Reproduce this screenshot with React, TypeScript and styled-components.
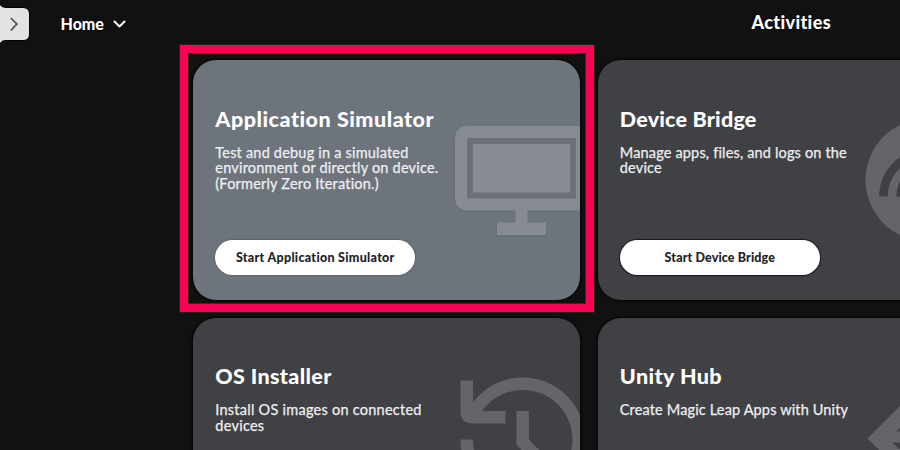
import React from "react";
import styled, { createGlobalStyle } from "styled-components";

const GlobalStyle = createGlobalStyle`
  * { box-sizing: border-box; }
  html, body { margin: 0; padding: 0; background: #111111; }
  body { overflow: hidden; }
`;

const Page = styled.div`
  position: relative;
  width: 900px;
  height: 450px;
  overflow: hidden;
  display: flex;
  flex-direction: column;
  background: #111111;
  color: #ffffff;
  font-family: "Lato", "Noto Sans", sans-serif;
  font-variant-ligatures: none;
`;

const TopBar = styled.header`
  display: flex;
  align-items: flex-start;
  flex: none;
  height: 60.4px;
`;

const DrawerTab = styled.button`
  width: 32px;
  height: 48px;
  padding: 0;
  border: 0;
  background: none;
  flex: none;

  svg { display: block; }
`;

const HomeMenu = styled.button`
  display: flex;
  align-items: center;
  gap: 9px;
  height: 48px;
  margin: 0 0 0 28.5px;
  padding: 0;
  border: 0;
  background: none;
  color: inherit;
  font: 900 16px/20px "Lato", sans-serif;
  text-shadow: 0 0 2px #000;

  svg { display: block; }
`;

const HomeLabel = styled.span`
  width: 43.5px;
  white-space: nowrap;
  text-align: left;
  letter-spacing: 0;
`;

const Heading = styled.h1`
  margin: 11px 0 0 625.5px;
  font-size: 18px;
  line-height: 22px;
  font-weight: 900;
  letter-spacing: 0.35px;
  text-shadow: 0 0 2px #000;
`;

const CardGrid = styled.main`
  display: grid;
  grid-template-columns: 387px 387px;
  grid-auto-rows: 240px;
  gap: 17.2px 17.5px;
  margin-left: 193.3px;
`;

const CardBox = styled.section<{ $active?: boolean }>`
  position: relative;
  overflow: hidden;
  display: flex;
  flex-direction: column;
  align-items: flex-start;
  padding: 45.4px 22px 25px;
  border-radius: 23px;
  background: ${(p) => (p.$active ? "#6d747c" : "#404144")};
  box-shadow: 0 0 2px 1px #050505;
`;

const CardTitle = styled.h2<{ $track: number }>`
  position: relative;
  margin: 0;
  font-size: 21.5px;
  line-height: 26px;
  font-weight: 900;
  white-space: nowrap;
  letter-spacing: ${(p) => p.$track}px;
`;

const CardText = styled.p<{ $track: number }>`
  position: relative;
  margin: 13.2px 0 0;
  font-size: 14.5px;
  line-height: 15.5px;
  color: #eeeff0;
  -webkit-text-stroke: 0.25px #eeeff0;
  white-space: pre;
  letter-spacing: ${(p) => p.$track}px;
`;

const PillButton = styled.button<{ $track: number; $active?: boolean }>`
  width: 200px;
  height: 35px;
  margin-top: auto;
  padding: 0;
  border: 0;
  border-radius: 18px;
  background: #ffffff;
  color: #222226;
  font: 900 12.5px/16px "Lato", sans-serif;
  letter-spacing: ${(p) => p.$track}px;
  box-shadow: 0 0 1px 1px ${(p) => (p.$active ? "#5f656f" : "#17181c")};
`;

const Artwork = styled.svg`
  position: absolute;
  inset: 0;
  width: 387px;
  height: 240px;
`;

const Highlight = styled.div`
  position: absolute;
  left: 180px;
  top: 45px;
  width: 414px;
  height: 267px;
  border: 8px solid #f70457;
  outline: 1px solid #27200f;
  box-shadow: inset 0 0 0 1px #34301a;
`;

const MonitorArt = () => (
  <Artwork viewBox="0 0 387 240">
    <g fill="#656a75" opacity="0.45" transform="translate(0 1)">
      <rect x="261.5" y="65.5" width="144" height="85.5" rx="13" />
      <path d="M322 151h13v11h19v14h-51v-14h19z" />
    </g>
    <rect x="262" y="66" width="143" height="84.5" rx="12" fill="#878b92" />
    <rect x="274" y="78" width="109" height="60.5" fill="#6c707a" />
    <rect x="280" y="84" width="97" height="48.5" fill="#888c94" />
    <path d="M322.5 150h12v12.5H353V175h-49v-12.5h18.5z" fill="#878b92" />
  </Artwork>
);

const BridgeArt = () => (
  <Artwork viewBox="0 0 387 240">
    <circle cx="328.5" cy="120" r="61" fill="#646569" />
    <g fill="none" stroke="#404144" strokeWidth="8.5">
      <path d="M285.5 136.5a43.5 43.5 0 0 1 87 0" />
      <path d="M302.5 136.5a26.5 26.5 0 0 1 53 0" />
    </g>
  </Artwork>
);

const HistoryArt = () => (
  <Artwork viewBox="0 0 387 240">
    <g fill="none" stroke="#646569" strokeWidth="12.5">
      <path d="M278.500 99A56 56 0 1 1 273.700 121.500" />
      <path d="M329.700 93v31l27 28" />
    </g>
    <path
      d="M267.500 62.500h12.500v27q0 3.500 3.500 3.500h29v12.500H280q-12.500 0-12.500-12z"
      fill="#646569"
    />
  </Artwork>
);

const UnityArt = () => (
  <Artwork viewBox="0 0 387 240">
    <path d="M269.500 120.500l33-33h20v66h-20z" fill="#646569" />
    <path d="M298 113.500l11-10v10zM294 124.500h16v14z" fill="#404144" />
  </Artwork>
);

type CardData = {
  title: string;
  titleTrack: number;
  text: string;
  textTrack: number;
  action?: string;
  actionTrack?: number;
  active?: boolean;
  art: React.ReactNode;
};

const cards: CardData[] = [
  {
    title: "Application Simulator",
    titleTrack: 0.52,
    text: "Test and debug in a simulated\nenvironment or directly on device.\n(Formerly Zero Iteration.)",
    textTrack: 0.2,
    action: "Start Application Simulator",
    actionTrack: 0.3,
    active: true,
    art: <MonitorArt />,
  },
  {
    title: "Device Bridge",
    titleTrack: 0.2,
    text: "Manage apps, files, and logs on the\ndevice",
    textTrack: 0.16,
    action: "Start Device Bridge",
    actionTrack: 0.12,
    art: <BridgeArt />,
  },
  {
    title: "OS Installer",
    titleTrack: 0.35,
    text: "Install OS images on connected\ndevices",
    textTrack: 0.25,
    art: <HistoryArt />,
  },
  {
    title: "Unity Hub",
    titleTrack: 0.42,
    text: "Create Magic Leap Apps with Unity",
    textTrack: 0.15,
    art: <UnityArt />,
  },
];

export default function App() {
  return (
    <>
      <GlobalStyle />
      <Page>
        <TopBar>
          <DrawerTab aria-label="Open drawer">
            <svg width="32" height="48" viewBox="0 0 32 48">
              <path
                d="M0 5Q2 8 5 8H23Q29 8 29 14V34Q29 40 23 40H5Q2 40 0 43Z"
                fill="#e1e3e2"
                stroke="#000"
                strokeWidth="2"
                paintOrder="stroke"
              />
              <path d="M10.800 18l6 6-6 6.500" fill="none" stroke="#4b4c4e" strokeWidth="1.700" />
            </svg>
          </DrawerTab>
          <HomeMenu>
            <HomeLabel>Home</HomeLabel>
            <svg width="13" height="9" viewBox="0 0 13 9">
              <path
                d="M1.500 1.500l5 5 5-5"
                fill="none"
                stroke="#fff"
                strokeWidth="2"
                strokeLinecap="round"
                strokeLinejoin="round"
              />
            </svg>
          </HomeMenu>
          <Heading>Activities</Heading>
        </TopBar>
        <CardGrid>
          {cards.map((card) => (
            <CardBox key={card.title} $active={card.active}>
              {card.art}
              <CardTitle $track={card.titleTrack}>{card.title}</CardTitle>
              <CardText $track={card.textTrack}>{card.text}</CardText>
              {card.action && (
                <PillButton $track={card.actionTrack ?? 0} $active={card.active}>
                  {card.action}
                </PillButton>
              )}
            </CardBox>
          ))}
        </CardGrid>
        <Highlight />
      </Page>
    </>
  );
}
